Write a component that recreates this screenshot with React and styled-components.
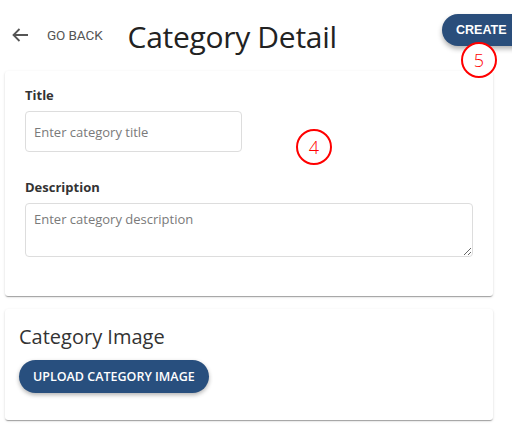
import { createGlobalStyle, styled } from "styled-components";

const GlobalStyle = createGlobalStyle`
  body {
    margin: 0;
    background: #fff;
    font-family: "Open Sans", "Noto Sans", sans-serif;
    color: #222;
  }
`;

const Page = styled.div`
  position: relative;
  width: 512px;
  height: 439px;
  overflow: hidden;
  padding: 0 19px 0 5px;
  box-sizing: border-box;
`;

const Header = styled.div`
  position: relative;
  display: flex;
  align-items: center;
  height: 71px;
  padding-left: 7px;
`;

const BackLink = styled.button`
  display: flex;
  align-items: center;
  gap: 18px;
  border: none;
  background: none;
  padding: 0;
  cursor: pointer;
  color: #555;
  font-family: "Roboto", "Liberation Sans", sans-serif;
  font-size: 13.5px;
  letter-spacing: -0.1px;
  margin-top: -2px;
`;

const PageTitle = styled.h1`
  margin: 0 0 0 25px;
  font-weight: 400;
  font-size: 30px;
  color: #222;
  letter-spacing: -0.3px;
  margin-top: 2px;
`;

const CreateButton = styled.button`
  position: absolute;
  left: 437px;
  top: 14px;
  height: 32px;
  padding: 0 24px 0 14px;
  border: none;
  border-radius: 16px;
  background: #2a4e7b;
  color: #fff;
  font-family: "Liberation Sans", Arial, sans-serif;
  font-weight: 700;
  font-size: 12.5px;
  box-shadow: 0 3px 5px rgba(0, 0, 0, 0.3);
  cursor: pointer;
`;

const Card = styled.div`
  background: #fff;
  border-radius: 3px;
  box-shadow: 0 2px 1px -1px rgba(0, 0, 0, 0.2), 0 1px 1px rgba(0, 0, 0, 0.14),
    0 1px 3px rgba(0, 0, 0, 0.12);
  padding: ${(p) => p.$pad};
  height: ${(p) => p.$h};
  box-sizing: border-box;
  margin-bottom: 13px;
`;

const Label = styled.div`
  font-weight: 700;
  font-size: 13px;
  color: #333;
  margin-bottom: 7px;
  line-height: 18px;
`;

const Field = styled.div`
  margin-bottom: ${(p) => p.$mb || "0"};
`;

const TextInput = styled.input`
  box-sizing: border-box;
  width: 217px;
  height: 41px;
  border: 1px solid #ddd;
  border-radius: 4px;
  padding: 0 8px;
  font-family: inherit;
  font-size: 13px;
  outline: none;
  &::placeholder {
    color: #7a7a7a;
  }
`;

const TextArea = styled.textarea`
  display: block;
  box-sizing: border-box;
  width: 448px;
  height: 54px;
  border: 1px solid #ddd;
  border-radius: 4px;
  padding: 6px 8px;
  font-family: inherit;
  font-size: 13px;
  outline: none;
  &::placeholder {
    color: #7a7a7a;
  }
`;

const SectionTitle = styled.h2`
  margin: 0 0 9px;
  font-weight: 400;
  font-size: 20px;
  line-height: 28px;
  color: #333;
`;

const UploadButton = styled.button`
  height: 33px;
  padding: 0 14px;
  border: none;
  border-radius: 17px;
  background: #284f7e;
  color: #fff;
  font-family: inherit;
  font-weight: 600;
  font-size: 12.5px;
  box-shadow: 0 2px 4px rgba(0, 0, 0, 0.3);
  cursor: pointer;
`;

const Marker = styled.div`
  position: absolute;
  left: ${(p) => p.$x}px;
  top: ${(p) => p.$y}px;
  width: 36px;
  height: 36px;
  box-sizing: border-box;
  border: 2px solid #f00;
  border-radius: 50%;
  background: ${(p) => (p.$fill ? "#fff" : "transparent")};
  color: #f00;
  font-family: "Open Sans", sans-serif;
  font-weight: 300;
  font-size: 18px;
  display: flex;
  align-items: center;
  justify-content: center;
`;

const ArrowLeft = () => (
  <svg width="17" height="14" viewBox="0 0 17 14" fill="none">
    <path d="M16 7H1.5M7.5 1L1.5 7l6 6" stroke="#555" strokeWidth="1.8" />
  </svg>
);

export default function App() {
  return (
    <>
      <GlobalStyle />
      <Page>
        <Header>
          <BackLink>
            <ArrowLeft />
            GO BACK
          </BackLink>
          <PageTitle>Category Detail</PageTitle>
          <CreateButton>CREATE</CreateButton>
        </Header>
        <Card $pad="15px 20px" $h="225px">
          <Field $mb="26px">
            <Label>Title</Label>
            <TextInput placeholder="Enter category title" />
          </Field>
          <Field>
            <Label>Description</Label>
            <TextArea placeholder="Enter category description" />
          </Field>
        </Card>
        <Card $pad="14px 14px" $h="111px">
          <SectionTitle>Category Image</SectionTitle>
          <UploadButton>UPLOAD CATEGORY IMAGE</UploadButton>
        </Card>
        <Marker $x={461} $y={42} $fill>5</Marker>
        <Marker $x={296} $y={129}>4</Marker>
      </Page>
    </>
  );
}
